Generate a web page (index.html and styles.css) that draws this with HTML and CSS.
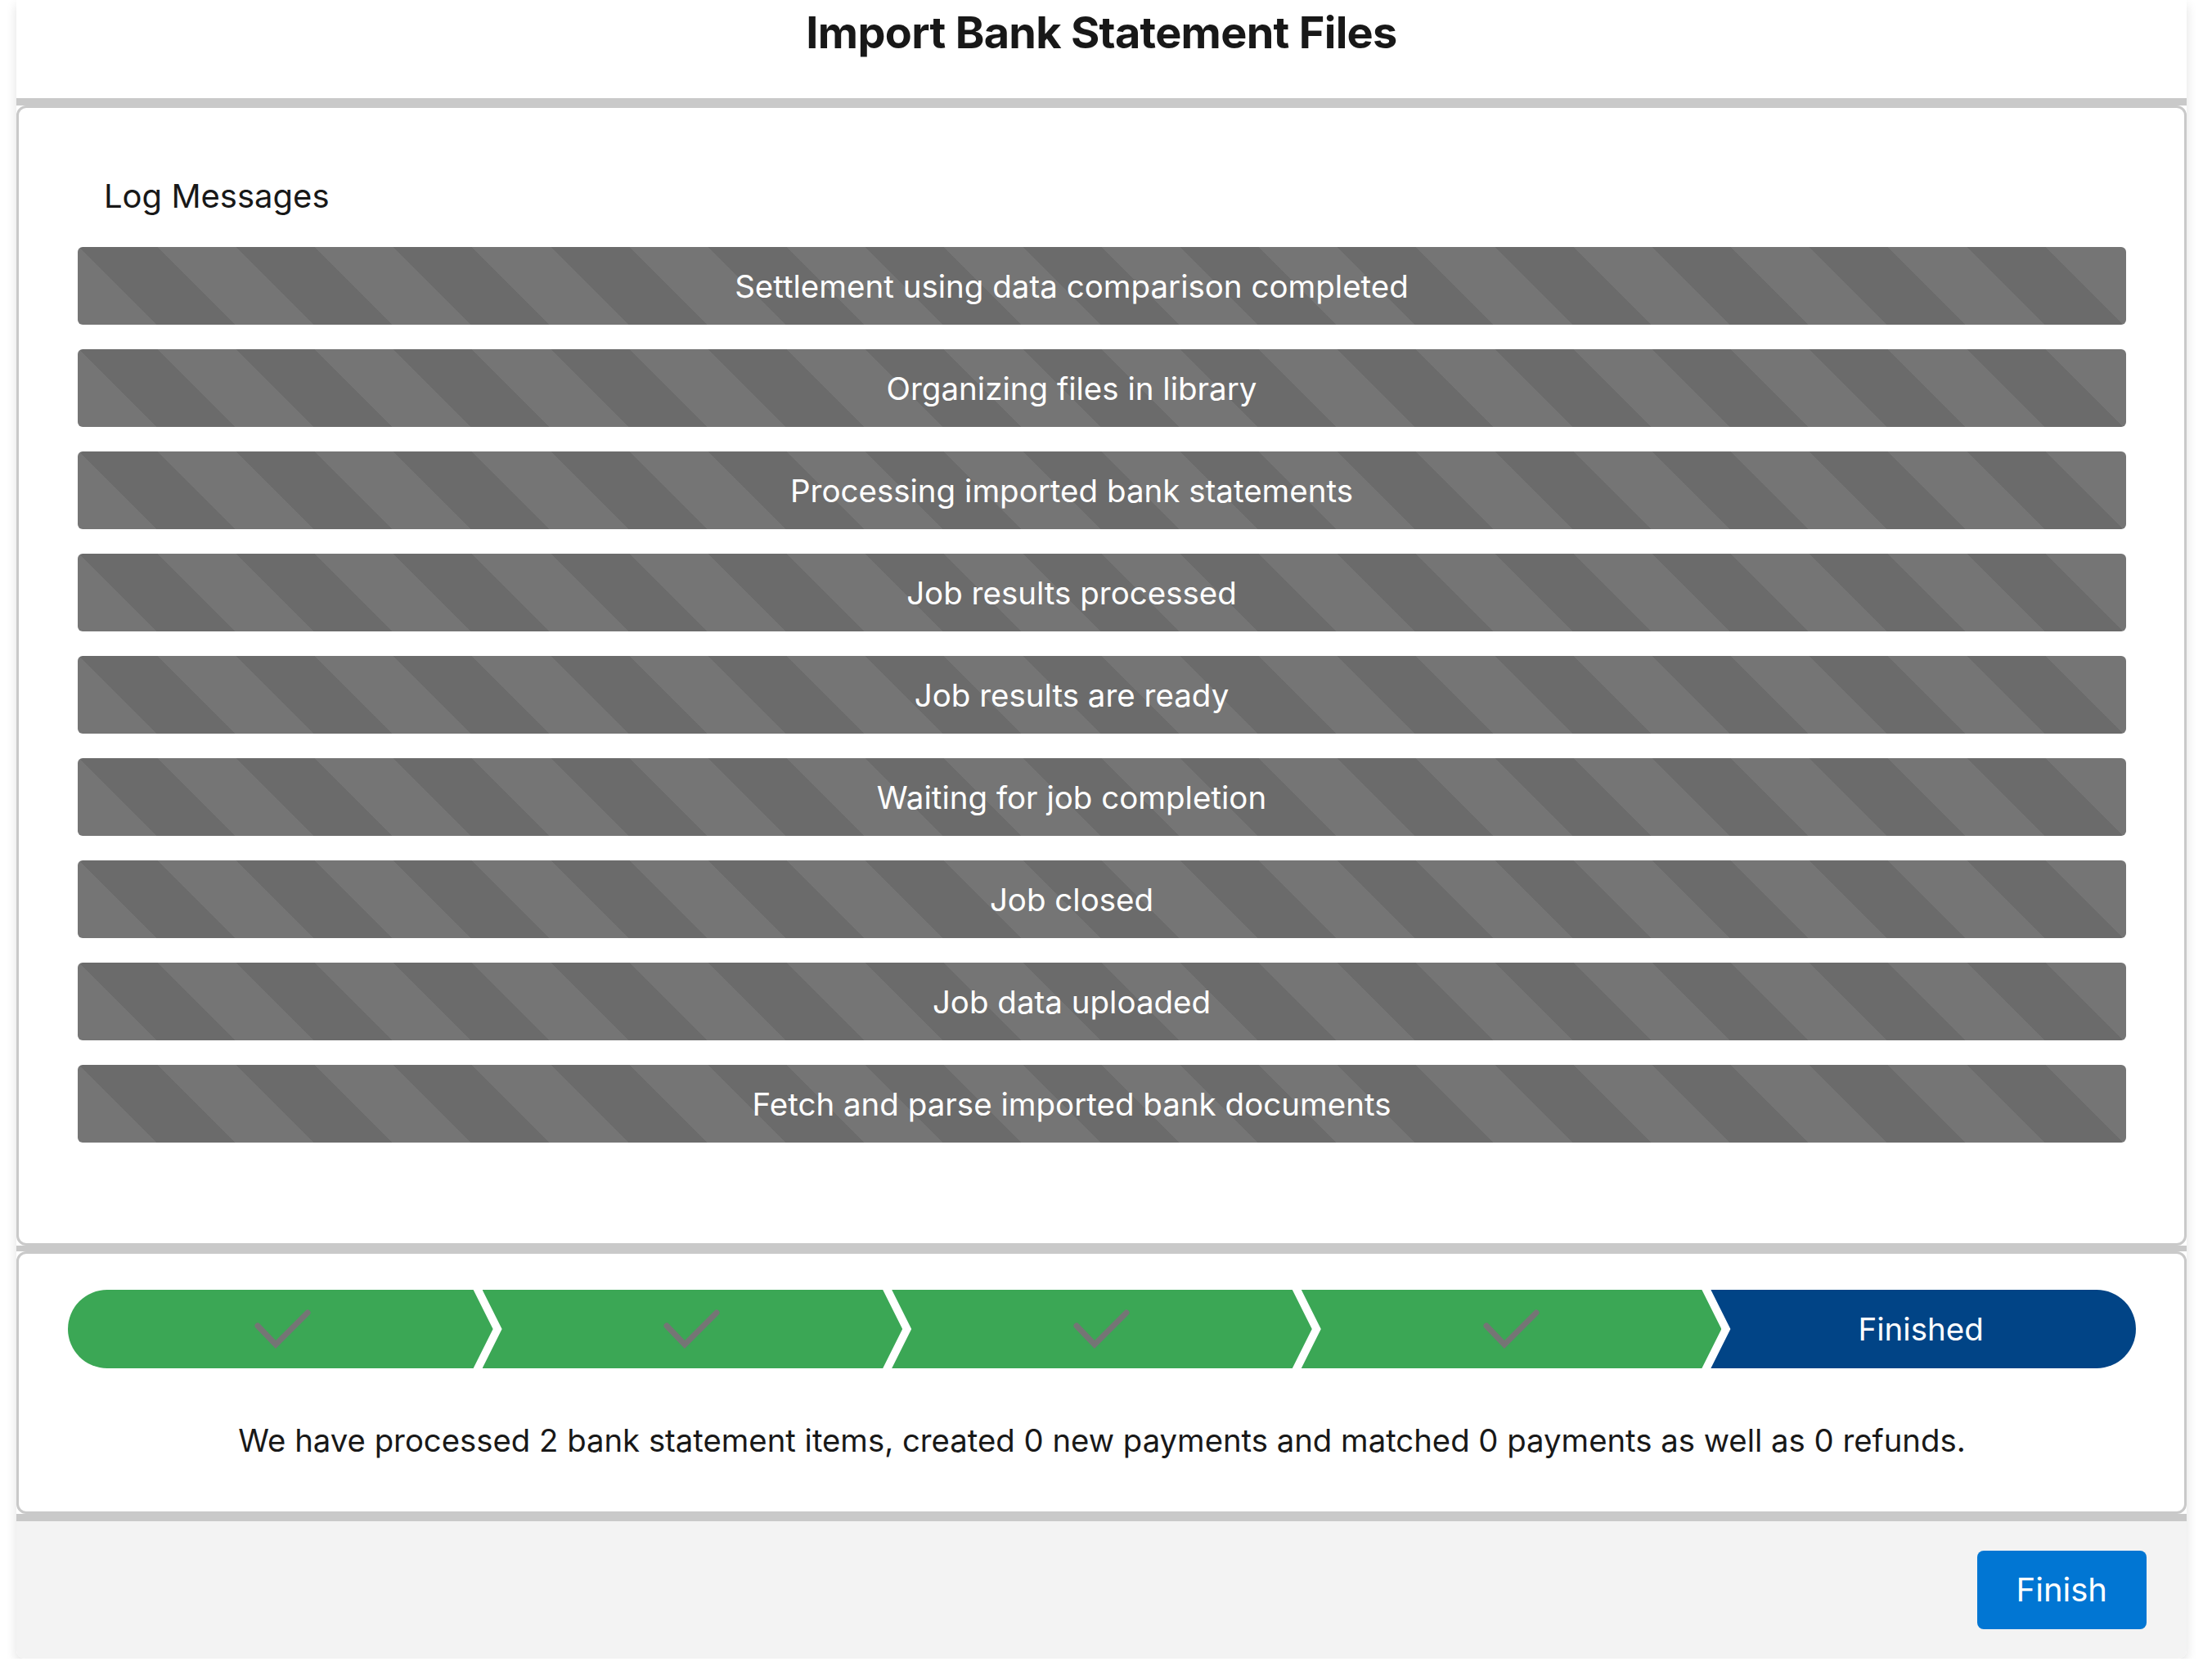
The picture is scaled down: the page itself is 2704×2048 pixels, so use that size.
FILE: index.html
```html
<!DOCTYPE html>
<html lang="en">
<head>
<meta charset="utf-8">
<title>Import Bank Statement Files</title>
<link rel="stylesheet" href="styles.css">
</head>
<body>
<div class="modal">
  <header class="modal-header">
    <h1 class="modal-title">Import Bank Statement Files</h1>
  </header>

  <section class="section section-log">
    <div class="card card-log">
      <h2 class="log-title">Log Messages</h2>
      <ul class="log-list">
        <li class="log-bar"><span class="log-text">Settlement using data comparison completed</span></li>
        <li class="log-bar"><span class="log-text">Organizing files in library</span></li>
        <li class="log-bar"><span class="log-text">Processing imported bank statements</span></li>
        <li class="log-bar"><span class="log-text">Job results processed</span></li>
        <li class="log-bar"><span class="log-text">Job results are ready</span></li>
        <li class="log-bar"><span class="log-text">Waiting for job completion</span></li>
        <li class="log-bar"><span class="log-text">Job closed</span></li>
        <li class="log-bar"><span class="log-text">Job data uploaded</span></li>
        <li class="log-bar"><span class="log-text">Fetch and parse imported bank documents</span></li>
      </ul>
    </div>
  </section>

  <section class="section section-path">
    <div class="card card-path">
      <div class="path">
        <div class="step step-first step-done">
          <svg class="check" viewBox="0 0 70 50" aria-hidden="true"><polyline points="4,21 26,44 65,5"/></svg>
        </div>
        <div class="step step-done">
          <svg class="check" viewBox="0 0 70 50" aria-hidden="true"><polyline points="4,21 26,44 65,5"/></svg>
        </div>
        <div class="step step-done">
          <svg class="check" viewBox="0 0 70 50" aria-hidden="true"><polyline points="4,21 26,44 65,5"/></svg>
        </div>
        <div class="step step-done">
          <svg class="check" viewBox="0 0 70 50" aria-hidden="true"><polyline points="4,21 26,44 65,5"/></svg>
        </div>
        <div class="step step-last step-current">Finished</div>
      </div>
      <p class="summary">We have processed 2 bank statement items, created 0 new payments and matched 0 payments as well as 0 refunds.</p>
    </div>
  </section>

  <footer class="modal-footer">
    <button class="btn-finish" type="button">Finish</button>
  </footer>
</div>
</body>
</html>
```

FILE: styles.css
```css
html, body {
  margin: 0;
  padding: 0;
  background: #ffffff;
}

body {
  font-family: "Inter", "Liberation Sans", sans-serif;
  color: #181818;
}

.modal {
  width: 2653px;
  margin-left: 20px;
  display: flex;
  flex-direction: column;
  border-radius: 0 0 10px 10px;
  box-shadow: 0 6px 14px rgba(0, 0, 0, 0.12);
}

.modal-header {
  height: 120px;
  background: #ffffff;
  border-bottom: 9px solid #c9c9c9;
  display: flex;
  justify-content: center;
  align-items: flex-start;
}

.modal-title {
  margin: 6px 0 0 0;
  font-size: 54px;
  line-height: 1.25;
  font-weight: 700;
  letter-spacing: -0.7px;
  color: #181818;
}

.section {
  background: #ffffff;
}

.section-log {
  border-bottom: 7px solid #c9c9c9;
}

.section-path {
  border-bottom: 9px solid #c9c9c9;
}

.card {
  border: 3px solid #c9c9c9;
  border-radius: 12px;
  background: #ffffff;
}

.card-log {
  padding: 82px 71px 123px 72px;
}

.log-title {
  margin: 0 0 37px 32px;
  font-size: 40px;
  line-height: 51px;
  font-weight: 400;
  color: #181818;
}

.log-list {
  list-style: none;
  margin: 0;
  padding: 0;
  display: flex;
  flex-direction: column;
  gap: 30px;
}

.log-bar {
  height: 95px;
  border-radius: 6px;
  background: repeating-linear-gradient(45deg, #757575 0 68px, #6b6b6b 68px 136px);
  display: flex;
  align-items: center;
  justify-content: center;
  padding-right: 74px;
}

.log-text {
  color: #ffffff;
  font-size: 38.5px;
  line-height: 1.25;
  padding-top: 2px;
}

.card-path {
  padding: 44px 59px 59px 60px;
}

.path {
  display: flex;
  height: 96px;
}

.step {
  flex: 1 1 0;
  display: flex;
  align-items: center;
  justify-content: center;
  clip-path: polygon(0 0, calc(100% - 24px) 0, 100% 50%, calc(100% - 24px) 100%, 0 100%, 24px 50%);
}

.step + .step {
  margin-left: -13px;
}

.step-first {
  border-radius: 48px 0 0 48px;
  padding-left: 6px;
  clip-path: polygon(0 0, calc(100% - 24px) 0, 100% 50%, calc(100% - 24px) 100%, 0 100%);
}

.step-last {
  border-radius: 0 48px 48px 0;
  clip-path: polygon(0 0, 100% 0, 100% 100%, 0 100%, 24px 50%);
}

.step-done {
  background: #3ba755;
}

.step-current {
  background: #014486;
  color: #ffffff;
  font-size: 38.5px;
  padding-right: 6px;
}

.check {
  width: 70px;
  height: 50px;
}

.check polyline {
  fill: none;
  stroke: #757575;
  stroke-width: 7;
  stroke-linecap: round;
  stroke-linejoin: miter;
}

.summary {
  margin: 61px 0 0 0;
  text-align: center;
  font-size: 38.3px;
  line-height: 55px;
  color: #181818;
}

.modal-footer {
  background: #f3f3f3;
  border-radius: 0 0 10px 10px;
  padding: 36px 49px;
  display: flex;
  justify-content: flex-end;
}

.btn-finish {
  height: 96px;
  padding: 0 48px;
  border: none;
  border-radius: 8px;
  background: #0176d3;
  color: #ffffff;
  font-family: "Inter", "Liberation Sans", sans-serif;
  font-size: 40px;
  line-height: 1;
}
```
